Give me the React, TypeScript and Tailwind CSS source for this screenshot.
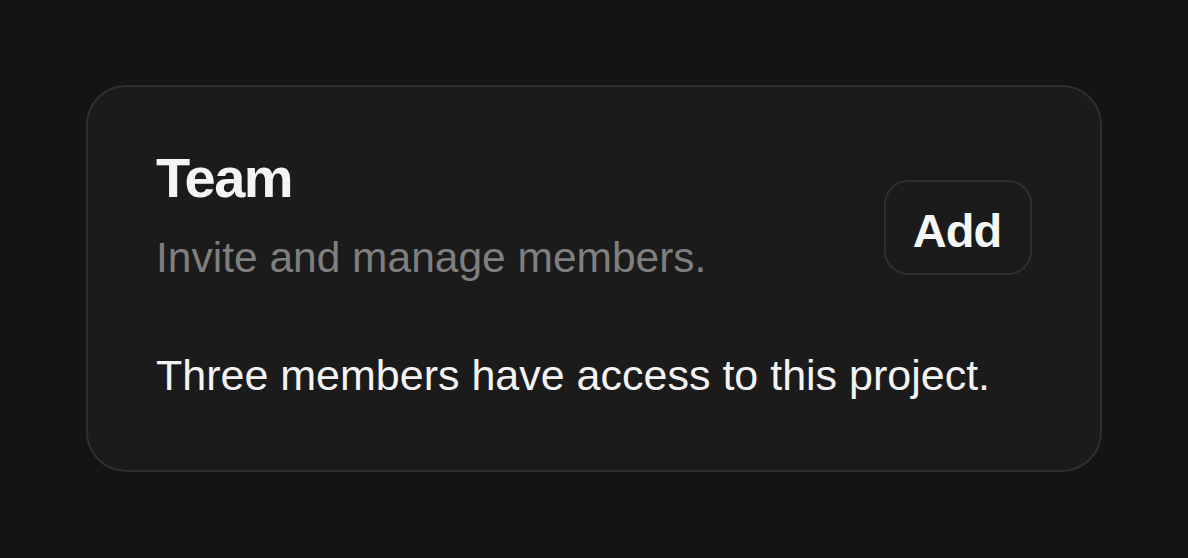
import React from "react";

export default function App() {
  return (
    <div
      className="min-h-[558px] w-full bg-[#141414] pl-[86px] pt-[85px]"
      style={{ fontFamily: "'Liberation Sans', Arial, sans-serif" }}
    >
      <div className="w-[1016px] h-[387px] rounded-[40px] border-2 border-[#2f2f2f] bg-[#1b1b1b] px-[68px] pt-[63px]">
        <div className="flex items-start justify-between">
          <div className="flex flex-col">
            <h2 className="text-[56px] leading-none font-bold tracking-[-1.5px] text-[#f4f4f4]">Team</h2>
            <p className="mt-[31px] text-[42.5px] leading-none text-[#7f7f7f]">Invite and manage members.</p>
          </div>
          <button className="mt-[30px] w-[148px] h-[95px] rounded-[24px] border-2 border-[#2f2f2f] bg-[#1b1b1b] pt-[5px] pr-[2px] text-[47px] font-bold tracking-[-1px] leading-none text-[#f6f6f6]">
            Add
          </button>
        </div>
        <p className="mt-[74px] text-[43px] leading-none text-[#f3f3f3]">Three members have access to this project.</p>
      </div>
    </div>
  );
}
